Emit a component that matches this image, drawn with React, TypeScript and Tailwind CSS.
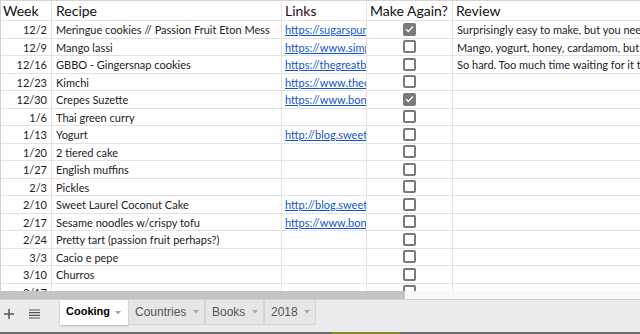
type Row = {
  week: string
  recipe: string
  link?: string
  done?: boolean
  review?: string
}

const ROWS: Row[] = [
  {
    week: '12/2',
    recipe: 'Meringue cookies // Passion Fruit Eton Mess',
    link: 'https://sugarspunrun.com/meringue-cookies/',
    done: true,
    review: 'Surprisingly easy to make, but you need a lot of patience for the oven',
  },
  {
    week: '12/9',
    recipe: 'Mango lassi',
    link: 'https://www.simplyrecipes.com/recipes/mango_lassi/',
    review: 'Mango, yogurt, honey, cardamom, but it needs more ice',
  },
  {
    week: '12/16',
    recipe: 'GBBO - Gingersnap cookies',
    link: 'https://thegreatbritishbakeoff.co.uk/gingersnaps/',
    review: 'So hard. Too much time waiting for it to chill',
  },
  { week: '12/23', recipe: 'Kimchi', link: 'https://www.thecuriouschickpea.com/kimchi/' },
  { week: '12/30', recipe: 'Crepes Suzette', link: 'https://www.bonappetit.com/recipe/crepes-suzette', done: true },
  { week: '1/6', recipe: 'Thai green curry' },
  { week: '1/13', recipe: 'Yogurt', link: 'http://blog.sweetlaurel.com/yogurt' },
  { week: '1/20', recipe: '2 tiered cake' },
  { week: '1/27', recipe: 'English muffins' },
  { week: '2/3', recipe: 'Pickles' },
  { week: '2/10', recipe: 'Sweet Laurel Coconut Cake', link: 'http://blog.sweetlaurel.com/coconut-cake' },
  { week: '2/17', recipe: 'Sesame noodles w/crispy tofu', link: 'https://www.bonappetit.com/recipe/sesame-noodles' },
  { week: '2/24', recipe: 'Pretty tart (passion fruit perhaps?)' },
  { week: '3/3', recipe: 'Cacio e pepe' },
  { week: '3/10', recipe: 'Churros' },
  { week: '3/17', recipe: '' },
]

const TABS = [
  { name: 'Cooking', width: 'w-[68px]' },
  { name: 'Countries', width: 'w-[77px]' },
  { name: 'Books', width: 'w-[59px]' },
  { name: '2018', width: 'w-[52px]' },
]

function Checkbox({ checked }: { checked?: boolean }) {
  if (checked) {
    return (
      <div className="flex h-[13px] w-[13px] items-center justify-center rounded-[2px] bg-[#7a7a7a]">
        <svg width="9" height="8" viewBox="0 0 9 8" fill="none">
          <path d="M1 4.2 L3.4 6.4 L8 1.4" stroke="#fff" strokeWidth="1.4" />
        </svg>
      </div>
    )
  }
  return <div className="h-[13px] w-[13px] rounded-[2px] border-2 border-[#7a7a7a] bg-white" />
}

function Caret() {
  return (
    <svg width="6" height="4" viewBox="0 0 6 4" className="shrink-0">
      <path d="M0 0 H6 L3 3.5 Z" fill="#a8a8a8" />
    </svg>
  )
}

function SheetRow({ row }: { row: Row }) {
  return (
    <div className="flex h-[17.5px] border-b border-[#e2e2e2] text-[11px] leading-[17px] text-[#222]">
      <div className="w-[51px] shrink-0 border-r border-[#e2e2e2] pr-[4px] text-right">{row.week}</div>
      <div className="w-[230px] shrink-0 overflow-hidden whitespace-nowrap border-r border-[#e2e2e2] pl-[4px]">
        {row.recipe}
      </div>
      <div className="w-[85px] shrink-0 overflow-hidden whitespace-nowrap border-r border-[#e2e2e2] pl-[3px] text-[#1155cc] underline">
        {row.link}
      </div>
      <div className="flex w-[86px] shrink-0 items-center justify-center border-r border-[#e2e2e2]">
        <Checkbox checked={row.done} />
      </div>
      <div className="min-w-0 flex-1 overflow-hidden whitespace-nowrap pl-[4px]">{row.review}</div>
    </div>
  )
}

export default function App() {
  return (
    <div className="flex h-[334px] w-[640px] flex-col overflow-hidden bg-white font-['Lato',sans-serif]">
      {/* Grid */}
      <div className="h-[291px] shrink-0 overflow-hidden border-l border-t border-[#d4d4d4]">
        <div className="flex h-[20px] border-b border-[#e2e2e2] text-[14px] leading-[19px] text-[#111]">
          <div className="w-[51px] shrink-0 border-r border-[#e2e2e2] pl-[2px]">Week</div>
          <div className="w-[230px] shrink-0 border-r border-[#e2e2e2] pl-[4px]">Recipe</div>
          <div className="w-[85px] shrink-0 border-r border-[#e2e2e2] pl-[3px] text-[#2a1010]">Links</div>
          <div className="w-[86px] shrink-0 border-r border-[#e2e2e2] pl-[3px]">Make Again?</div>
          <div className="flex-1 pl-[3px]">Review</div>
        </div>
        {ROWS.map((row) => (
          <SheetRow key={row.week} row={row} />
        ))}
      </div>

      {/* Horizontal scrollbar */}
      <div className="flex h-[9px] shrink-0 border-b border-[#cfcfcf] bg-[#f8f8f8]">
        <div className="w-[405px] bg-[#c4c4c4]" />
      </div>

      {/* Sheet tabs */}
      <div className="flex flex-1 items-start bg-[#ececec] font-['Liberation_Sans',sans-serif] text-[12px]">
        <div className="flex h-[27px] w-[60px] shrink-0 items-center gap-[15px] pl-[4px] text-[#555]">
          <svg width="10" height="10" viewBox="0 0 10 10">
            <path d="M5 0 V10 M0 5 H10" stroke="#555" strokeWidth="1.5" />
          </svg>
          <svg width="11" height="10" viewBox="0 0 11 10">
            <path d="M0 1 H11 M0 3.7 H11 M0 6.3 H11 M0 9 H11" stroke="#555" strokeWidth="1.2" />
          </svg>
        </div>
        {TABS.map((tab, i) => (
          <div
            key={tab.name}
            className={
              i === 0
                ? `flex h-[25px] ${tab.width} shrink-0 items-center justify-between bg-white pl-[6px] pr-[7px] font-bold text-black shadow-[0_1px_2px_rgba(0,0,0,0.25)]`
                : `flex h-[25px] ${tab.width} shrink-0 items-center justify-between border-x border-b border-[#d4d4d4] bg-[#e6e6e6] pl-[6px] pr-[5px] text-[#555]`
            }
          >
            <span className={i === 0 ? 'mt-[-3px] text-[11px]' : ''}>{tab.name}</span>
            <Caret />
          </div>
        ))}
      </div>
      <div className="flex h-[2px] shrink-0 bg-[#6a6a6a]">
        <div className="ml-[332px] w-[68px] bg-[#8a8a28]" />
      </div>
    </div>
  )
}
